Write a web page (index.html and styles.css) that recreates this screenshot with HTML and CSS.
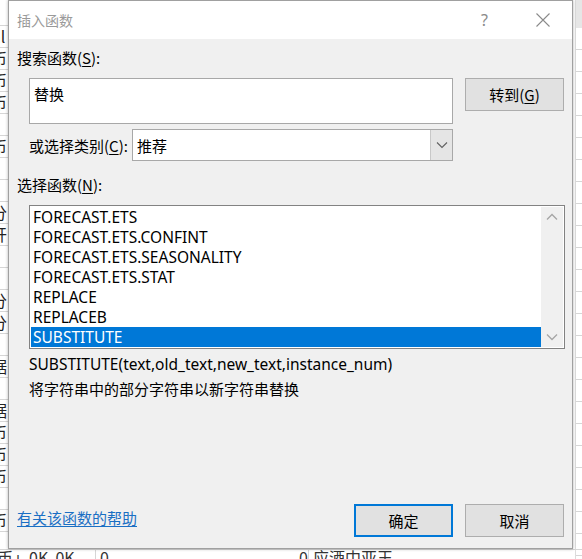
FILE: index.html
```html
<!DOCTYPE html>
<html>
<head>
    <title>插入函数</title>
    <meta charset="UTF-8">
    <link rel="stylesheet" href="styles.css">
</head>
<body>
    <div class="desk">
        <div class="sheet-left">
            <div class="cell"></div>
            <div class="cell">nl</div>
            <div class="cell">币</div>
            <div class="cell">币</div>
            <div class="cell">币</div>
            <div class="cell">'</div>
            <div class="cell">币</div>
            <div class="cell">'</div>
            <div class="cell"></div>
            <div class="cell">分</div>
            <div class="cell">开</div>
            <div class="cell"></div>
            <div class="cell">'</div>
            <div class="cell">分</div>
            <div class="cell">分</div>
            <div class="cell"></div>
            <div class="cell">据</div>
            <div class="cell"></div>
            <div class="cell">据</div>
            <div class="cell">币</div>
            <div class="cell">币</div>
            <div class="cell">币</div>
            <div class="cell"></div>
            <div class="cell">币</div>
        </div>
        <div class="sheet-bottom">
            <span class="b1">币」0K&nbsp;&nbsp;0K</span>
            <span class="b2">0</span>
            <span class="b3">0</span>
            <span class="b4">应酒中亚王</span>
        </div>

        <div class="dialog">
            <div class="titlebar">
                <span class="title">插入函数</span>
                <span class="help">?</span>
                <span class="close">
                    <svg width="16" height="16" viewBox="0 0 16 16"><path d="M1.5 1.5 L14.5 14.5 M14.5 1.5 L1.5 14.5" stroke="#8a8a8a" stroke-width="1.1" fill="none"/></svg>
                </span>
            </div>
            <div class="body">
                <div class="label">搜索函数(<u>S</u>):</div>
                <div class="search-row">
                    <div class="search">替换</div>
                    <button class="btn">转到(<u>G</u>)</button>
                </div>
                <div class="cat-row">
                    <span class="cat-label">或选择类别(<u>C</u>):</span>
                    <div class="combo">
                        <span class="combo-text">推荐</span>
                        <span class="drop">
                            <svg width="12" height="8" viewBox="0 0 12 8"><path d="M1 1.5 L6 6.5 L11 1.5" stroke="#606060" stroke-width="1.1" fill="none"/></svg>
                        </span>
                    </div>
                </div>
                <div class="label list-label">选择函数(<u>N</u>):</div>
                <div class="list">
                    <div class="items">
                        <div class="item">FORECAST.ETS</div>
                        <div class="item">FORECAST.ETS.CONFINT</div>
                        <div class="item">FORECAST.ETS.SEASONALITY</div>
                        <div class="item">FORECAST.ETS.STAT</div>
                        <div class="item">REPLACE</div>
                        <div class="item">REPLACEB</div>
                        <div class="item selected">SUBSTITUTE</div>
                    </div>
                    <div class="scroll">
                        <svg width="12" height="8" viewBox="0 0 12 8"><path d="M1 6.5 L6 1.5 L11 6.5" stroke="#a6a6a6" stroke-width="1.3" fill="none"/></svg>
                        <svg width="12" height="8" viewBox="0 0 12 8"><path d="M1 1.5 L6 6.5 L11 1.5" stroke="#a6a6a6" stroke-width="1.3" fill="none"/></svg>
                    </div>
                </div>
                <div class="sig">SUBSTITUTE(text,old_text,new_text,instance_num)</div>
                <div class="desc">将字符串中的部分字符串以新字符串替换</div>
                <div class="footer">
                    <a class="help-link" href="#">有关该函数的帮助</a>
                    <button class="btn ok">确定</button>
                    <button class="btn">取消</button>
                </div>
            </div>
        </div>
    </div>
</body>
</html>
```

FILE: styles.css
```css
body {
    margin: 0;
    font-family: "Noto Sans", "Noto Sans CJK SC", sans-serif;
    font-size: 15px;
    color: #000;
}

.desk {
    position: relative;
    width: 582px;
    height: 559px;
    overflow: hidden;
    background:
        linear-gradient(#dcdcdc, #dcdcdc) 575px 0 / 1px 559px no-repeat,
        linear-gradient(#e6e6e6, #e6e6e6) 576px 0 / 6px 28px no-repeat,
        repeating-linear-gradient(to bottom, transparent 0, transparent 21px, #d6d6d6 21px, #d6d6d6 22px) 576px 28px / 6px 559px no-repeat,
        #fff;
}

/* spreadsheet peeking out behind the dialog */
.sheet-left {
    width: 8px;
    overflow: hidden;
    padding-top: 4px;
}
.cell {
    height: 21px;
    line-height: 21px;
    border-bottom: 1px solid #d6d6d6;
    margin-left: -9px;
    white-space: nowrap;
    font-family: "Noto Sans CJK SC", sans-serif;
    font-size: 16px;
    color: #222;
}

.sheet-bottom {
    position: absolute;
    left: 0;
    top: 549px;
    width: 582px;
    height: 10px;
    border-top: 1px solid #d6d6d6;
    font-family: "Noto Sans CJK SC", sans-serif;
    font-size: 16px;
    line-height: 14px;
    color: #333;
    white-space: nowrap;
    display: flex;
}
.b1 { margin-left: -3px; width: 98px; }
.b2 { width: 180px; border-left: 1px solid #d6d6d6; padding-left: 4px; }
.b3 { width: 28px; text-align: right; }
.b4 { border-left: 1px solid #d6d6d6; padding-left: 4px; }

/* the dialog window */
.dialog {
    position: absolute;
    left: 8px;
    top: 0;
    width: 565px;
    height: 549px;
    background: #f0f0f0;
    border: 1px solid #a0a0a0;
    box-sizing: border-box;
    box-shadow: 0 0 3px rgba(0, 0, 0, 0.3);
    font-family: "Noto Sans", "Noto Sans CJK SC", sans-serif;
}

.titlebar {
    height: 38px;
    background: #fff;
    display: flex;
    align-items: center;
}
.title {
    margin-left: 8px;
    font-family: "Noto Sans CJK SC", sans-serif;
    font-size: 14px;
    color: #9a9a9a;
    flex: 1;
}
.help {
    font-size: 16px;
    color: #8a8a8a;
    margin-right: 47px;
}
.close {
    display: flex;
    margin-right: 21px;
}

.body {
    padding: 9px 0 0 8px;
}
.label {
    height: 20px;
    line-height: 20px;
    font-family: "Noto Sans CJK SC", sans-serif;
}
u {
    text-decoration-thickness: 1px;
    text-underline-offset: 2px;
}

.search-row {
    display: flex;
    margin-top: 10px;
    margin-left: 12px;
}
.search {
    width: 424px;
    height: 46px;
    box-sizing: border-box;
    background: #fff;
    border: 1px solid #a8a8a8;
    padding: 5px 0 0 4px;
    line-height: 20px;
    font-family: "Noto Sans CJK SC", sans-serif;
}
.btn {
    width: 99px;
    height: 33px;
    background: #e1e1e1;
    border: 1px solid #adadad;
    font-family: "Noto Sans CJK SC", sans-serif;
    font-size: 15px;
    color: #000;
    padding: 0;
    margin-left: 12px;
}

.cat-row {
    display: flex;
    align-items: center;
    margin-top: 5px;
    margin-left: 12px;
}
.cat-label {
    width: 103px;
    font-family: "Noto Sans CJK SC", sans-serif;
}
.combo {
    width: 321px;
    height: 32px;
    box-sizing: border-box;
    background: #fff;
    border: 1px solid #a8a8a8;
    display: flex;
    align-items: center;
}
.combo-text {
    flex: 1;
    padding-left: 4px;
    font-family: "Noto Sans CJK SC", sans-serif;
}
.drop {
    width: 21px;
    height: 30px;
    background: #e5e5e5;
    border-left: 1px solid #c8c8c8;
    display: flex;
    align-items: center;
    justify-content: center;
}

.list-label {
    margin-top: 14px;
}

.list {
    margin-top: 10px;
    margin-left: 12px;
    width: 536px;
    height: 144px;
    box-sizing: border-box;
    background: #fff;
    border: 1px solid #828282;
    padding: 1px;
    display: flex;
}
.items {
    flex: 1;
}
.item {
    height: 20px;
    line-height: 20px;
    padding-left: 2px;
    font-size: 15.5px;
    white-space: nowrap;
}
.item.selected {
    background: #0078d7;
    color: #fff;
}
.scroll {
    width: 22px;
    background: #f0f0f0;
    display: flex;
    flex-direction: column;
    justify-content: space-between;
    align-items: center;
    padding: 6px 0;
    box-sizing: border-box;
}

.sig {
    margin: 5px 0 0 12px;
    height: 20px;
    line-height: 20px;
    font-size: 15.5px;
}
.desc {
    margin: 5px 0 0 12px;
    height: 20px;
    line-height: 20px;
    font-family: "Noto Sans CJK SC", sans-serif;
}

.footer {
    display: flex;
    align-items: center;
    margin-top: 105px;
}
.help-link {
    flex: 1;
    color: #1a6fc4;
    font-family: "Noto Sans CJK SC", sans-serif;
    text-underline-offset: 2px;
    margin-top: -6px;
}
.btn.ok {
    border: 2px solid #0078d7;
}
.footer .btn:last-child {
    margin-right: 8px;
}
```
